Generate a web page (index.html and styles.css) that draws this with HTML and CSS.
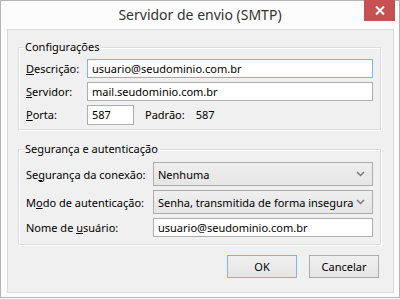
FILE: index.html
```html
<!DOCTYPE html>
<html lang="pt-BR">
<head>
    <meta charset="UTF-8">
    <title>Servidor de envio (SMTP)</title>
    <link rel="stylesheet" href="styles.css">
</head>
<body>
    <div class="window">
        <div class="titlebar">
            <span class="title">Servidor de envio (SMTP)</span>
            <button class="close" aria-label="Fechar">
                <svg width="10" height="9" viewBox="0 0 10 9">
                    <path d="M1 0.5 L9 8.5 M9 0.5 L1 8.5" stroke="#fff" stroke-width="2"/>
                </svg>
            </button>
        </div>
        <div class="client">
            <fieldset class="group">
                <legend>Configurações</legend>
                <div class="row">
                    <label class="lbl short"><u>D</u>escrição:</label>
                    <input class="field focused" type="text" value="usuario@seudominio.com.br">
                </div>
                <div class="row">
                    <label class="lbl short"><u>S</u>ervidor:</label>
                    <input class="field" type="text" value="mail.seudominio.com.br">
                </div>
                <div class="row">
                    <label class="lbl short"><u>P</u>orta:</label>
                    <input class="field port" type="text" value="587">
                    <span class="default-label">Padrão:</span>
                    <span class="default-value">587</span>
                </div>
            </fieldset>

            <fieldset class="group second">
                <legend>Segurança e autenticação</legend>
                <div class="row tall">
                    <label class="lbl long">Se<u>g</u>urança da conexão:</label>
                    <div class="combo">
                        <span>Nenhuma</span>
                        <svg class="chevron" width="9" height="6" viewBox="0 0 9 6">
                            <path d="M1 1 L4.5 4.5 L8 1" fill="none" stroke="#7a7a7a" stroke-width="1.5"/>
                        </svg>
                    </div>
                </div>
                <div class="row tall">
                    <label class="lbl long">M<u>o</u>do de autenticação:</label>
                    <div class="combo">
                        <span>Senha, transmitida de forma insegura</span>
                        <svg class="chevron" width="9" height="6" viewBox="0 0 9 6">
                            <path d="M1 1 L4.5 4.5 L8 1" fill="none" stroke="#7a7a7a" stroke-width="1.5"/>
                        </svg>
                    </div>
                </div>
                <div class="row">
                    <label class="lbl long">Nome de <u>u</u>suário:</label>
                    <input class="field" type="text" value="usuario@seudominio.com.br">
                </div>
            </fieldset>

            <div class="buttons">
                <button class="btn default">OK</button>
                <button class="btn">Cancelar</button>
            </div>
        </div>
    </div>
</body>
</html>
```

FILE: styles.css
```css
body {
    margin: 0;
    background: #fff;
    font-family: 'Noto Sans', 'Open Sans', sans-serif;
    font-size: 11px;
    color: #000;
}

.window {
    width: 398px;
    height: 296px;
    border: 1px solid #b4b4b4;
    background: #fcfcfc;
    display: flex;
    flex-direction: column;
}

.titlebar {
    height: 28px;
    position: relative;
    display: flex;
    align-items: center;
    justify-content: center;
}

.title {
    font-size: 14px;
    color: #333;
    margin-top: -1px;
}

.close {
    position: absolute;
    top: -1px;
    right: 4px;
    width: 31px;
    height: 21px;
    border: none;
    padding: 0;
    background: #c75050;
    display: flex;
    align-items: center;
    justify-content: center;
}

.client {
    flex: 1;
    margin: 0 5px 4px 6px;
    border: 1px solid #dadada;
    background: #f0f0f0;
    padding: 0 12px 12px 10px;
    display: flex;
    flex-direction: column;
    align-items: flex-start;
}

.group {
    box-sizing: border-box;
    margin: 9px 0 0 0;
    width: 363px;
    min-width: 0;
    border: 1px solid #dcdcdc;
    box-shadow: inset 1px 1px 0 #fff, 1px 1px 0 #fff;
    padding: 4px 6px 5px 7px;
    display: flex;
    flex-direction: column;
    gap: 4px;
}

.group.second {
    margin-top: 11px;
    padding-top: 5px;
    padding-bottom: 7px;
}

.group legend {
    padding: 0 2px;
    margin-left: -3px;
    line-height: 16px;
}

.row {
    display: flex;
    align-items: center;
    height: 19px;
}

.row.tall {
    height: 24px;
}

.lbl {
    flex: none;
    white-space: nowrap;
}

.lbl.short {
    width: 61px;
}

.lbl.long {
    width: 127px;
}

.field {
    box-sizing: border-box;
    flex: 1;
    min-width: 0;
    height: 19px;
    margin: 0 1px 0 0;
    padding: 0 4px;
    border: 1px solid #abadb3;
    background: #fff;
    font: inherit;
    color: #000;
    outline: none;
}

.field.focused {
    border-color: #7eb4ea;
}

.field.port {
    flex: none;
    width: 47px;
    height: 20px;
}

.default-label {
    margin-left: 10px;
}

.default-value {
    margin-left: 11px;
}

.combo {
    box-sizing: border-box;
    flex: 1;
    min-width: 0;
    height: 24px;
    margin-right: 1px;
    border: 1px solid #acacac;
    background: linear-gradient(#efefef, #e5e5e5);
    display: flex;
    align-items: center;
    justify-content: space-between;
    padding: 0 7px 0 4px;
    white-space: nowrap;
}

.buttons {
    align-self: stretch;
    display: flex;
    justify-content: flex-end;
    gap: 12px;
    margin-top: 10px;
    padding-right: 2px;
}

.btn {
    box-sizing: border-box;
    width: 70px;
    height: 23px;
    border: 1px solid #acacac;
    background: linear-gradient(#f0f0f0, #e5e5e5);
    font: inherit;
    color: #000;
    padding: 0;
}

.btn.default {
    border-color: #7eb4ea;
}
```
